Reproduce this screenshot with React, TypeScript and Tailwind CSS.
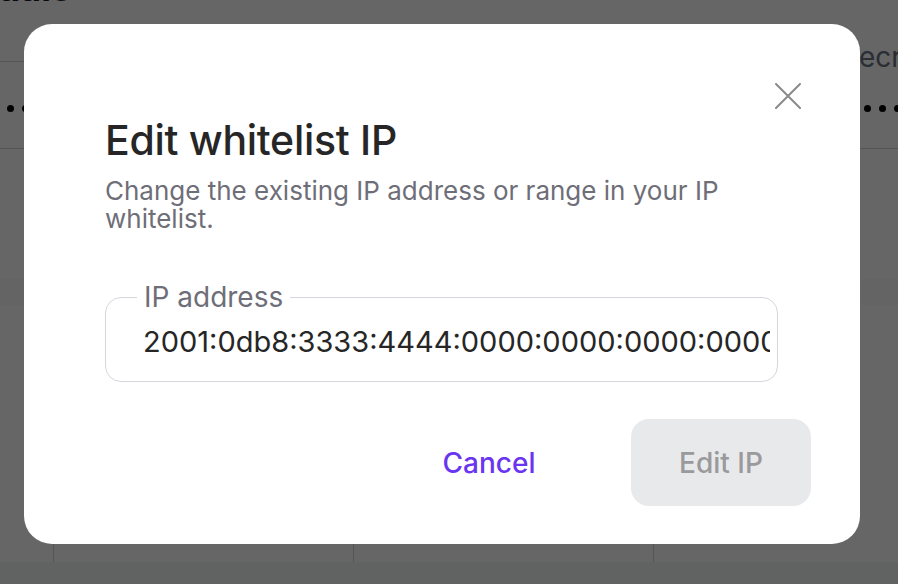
import { useState } from "react";

const Dots = ({ count }: { count: number }) => (
  <div className="flex gap-[8px]">
    {Array.from({ length: count }).map((_, i) => (
      <span key={i} className="block size-[7px] rounded-full bg-black" />
    ))}
  </div>
);

const BackgroundPage = () => (
  <div className="flex flex-col w-full h-full text-gray-900">
    <div className="h-[62px] flex">
      <div className="w-[420px] shrink-0 border-b border-gray-300">
        <h1 className="-mt-[32px] -ml-[131px] text-[36px] font-bold leading-[40px] whitespace-nowrap">Credentials</h1>
      </div>
      <div className="flex-1 min-w-0 flex items-start pl-[421px] pt-[40px]">
        <span className="shrink-0 text-[28px] leading-[34px] text-gray-500">Secret</span>
      </div>
    </div>
    <div className="h-[87px] border-b border-gray-300 flex items-center justify-between px-[7px] pt-[6px]">
      <Dots count={6} />
      <div className="-mr-[10px]">
        <Dots count={6} />
      </div>
    </div>
    <div className="h-[130px]" />
    <div className="h-[26px] bg-gray-50" />
    <div className="flex-1" />
    <div className="h-[80px] flex pl-[53px]">
      <div className="w-[300px] border-l border-gray-300" />
      <div className="w-[300px] border-l border-gray-300" />
      <div className="w-[245px] border-l border-gray-300" />
    </div>
    <div className="h-[22px] bg-gray-100" />
  </div>
);

const CloseIcon = () => (
  <svg width="26" height="26" viewBox="0 0 26 26" fill="none">
    <path d="M1 1L25 25M25 1L1 25" stroke="#8a8a8a" strokeWidth="2" strokeLinecap="round" />
  </svg>
);

export default function App() {
  const [ip, setIp] = useState("2001:0db8:3333:4444:0000:0000:0000:0000");

  return (
    <div className="relative w-[898px] h-[584px] overflow-hidden bg-white font-['Inter',sans-serif]">
      <BackgroundPage />
      <div className="absolute inset-0 bg-black/60 p-[24px]">
        <div className="w-[836px] h-[520px] bg-white rounded-[28px] flex flex-col pl-[81px] pr-[49px]">
          <div className="flex justify-end pt-[59px] pr-[10px]">
            <button className="size-[26px]">
              <CloseIcon />
            </button>
          </div>
          <div className="mr-[33px] flex flex-col">
            <h2 className="mt-[8px] text-[41px] leading-[46px] font-medium text-[#262626] tracking-[-0.3px]">
              Edit whitelist IP
            </h2>
            <p className="mt-[14px] text-[26px] leading-[28px] text-[#6e6e78]">
              Change the existing IP address or range in your IP whitelist.
            </p>
            <fieldset className="mt-[48px] border-[1.5px] border-[#d6d6dc] rounded-[16px] pl-[37px] pr-[7px] pb-[12px]">
              <legend className="-ml-[6px] px-[7px] text-[28px] leading-[32px] text-[#6e6e78]">IP address</legend>
              <input
                value={ip}
                onChange={(e) => setIp(e.target.value)}
                className="w-full h-[56px] bg-transparent text-[29px] text-[#262626] outline-none"
              />
            </fieldset>
          </div>
          <div className="mt-[37px] flex justify-end items-center gap-[52px]">
            <button className="w-[180px] h-[87px] text-[28px] font-medium text-[#6a35f0]">Cancel</button>
            <button
              disabled
              className="w-[180px] h-[87px] rounded-[18px] bg-[#e8e9eb] text-[28px] font-medium text-[#9a9a9c]"
            >
              Edit IP
            </button>
          </div>
        </div>
      </div>
    </div>
  );
}
